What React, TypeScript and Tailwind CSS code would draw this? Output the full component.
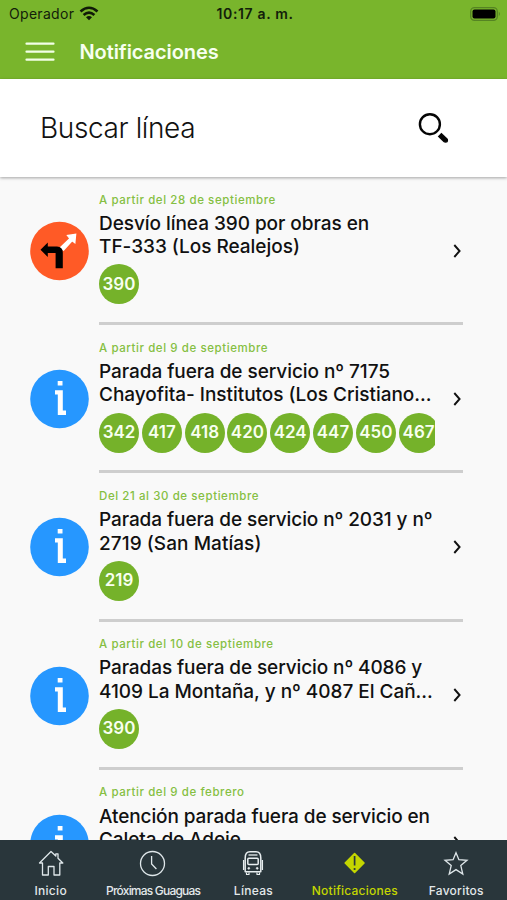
type Notice = {
  date: string;
  lines: { text: string; spacing: string }[];
  routes: string[];
  kind: 'detour' | 'info';
};

const notices: Notice[] = [
  {
    date: 'A partir del 28 de septiembre',
    lines: [
      { text: 'Desvío línea 390 por obras en', spacing: 'tracking-[-0.05px]' },
      { text: 'TF-333 (Los Realejos)', spacing: 'tracking-[-0.02px]' },
    ],
    routes: ['390'],
    kind: 'detour',
  },
  {
    date: 'A partir del 9 de septiembre',
    lines: [
      { text: 'Parada fuera de servicio nº 7175', spacing: 'tracking-[-0.06px]' },
      { text: 'Chayofita- Institutos (Los Cristiano...', spacing: 'tracking-[-0.03px]' },
    ],
    routes: ['342', '417', '418', '420', '424', '447', '450', '467'],
    kind: 'info',
  },
  {
    date: 'Del 21 al 30 de septiembre',
    lines: [
      { text: 'Parada fuera de servicio nº 2031 y nº', spacing: 'tracking-[-0.09px]' },
      { text: '2719 (San Matías)', spacing: 'tracking-[0.06px]' },
    ],
    routes: ['219'],
    kind: 'info',
  },
  {
    date: 'A partir del 10 de septiembre',
    lines: [
      { text: 'Paradas fuera de servicio nº 4086 y', spacing: 'tracking-[-0.1px]' },
      { text: '4109 La Montaña, y nº 4087 El Cañ...', spacing: 'tracking-[-0.03px]' },
    ],
    routes: ['390'],
    kind: 'info',
  },
  {
    date: 'A partir del 9 de febrero',
    lines: [
      { text: 'Atención parada fuera de servicio en', spacing: 'tracking-[-0.1px]' },
      { text: 'Caleta de Adeje', spacing: 'tracking-[-0.1px]' },
    ],
    routes: [],
    kind: 'info',
  },
];

function DetourIcon() {
  return (
    <svg viewBox="0 0 60 60" className="size-[60px]">
      <circle cx="30.5" cy="30" r="29.3" fill="#ff5a26" />
      <path d="M31 27 L41 17.6 L38.6 14.6 L46.6 13.4 L45.8 21.6 L43.2 19.6 L34.5 29 Z" fill="#fff" stroke="#fff" strokeWidth="1.4" />
      <path d="M11.5 28.8 L18.8 21.6 L18.8 25.4 L28 25.4 Q33.8 25.6 33.8 31.5 L33.8 47.3 L26.6 47.3 L26.6 32 L18.8 32 L18.8 36 Z" fill="#000" />
    </svg>
  );
}

function InfoIcon() {
  return (
    <svg viewBox="0 0 60 60" className="size-[60px]">
      <circle cx="30.5" cy="30" r="29.3" fill="#2697ff" />
      <path d="M28.7 12h4.8v4.6h-4.8z M26 21.2h7.8v20.3h3.2v4.4h-8.2V25.4h-2.8z" fill="#fff" />
    </svg>
  );
}

function NoticeRow({ notice }: { notice: Notice }) {
  return (
    <li className="flex h-[148.2px] shrink-0 pl-[29px]">
      <div className="w-[70px] shrink-0 pt-[44px]">
        {notice.kind === 'detour' ? <DetourIcon /> : <InfoIcon />}
      </div>
      <div className="flex h-full w-[364px] flex-col border-b-[3px] border-[#cecece]">
        <p className="mt-[14.7px] h-[17px] whitespace-nowrap text-[11.5px] leading-[17px] font-medium tracking-[0.58px] text-[#85bf42]">
          {notice.date}
        </p>
        <div className="flex">
          <div className="w-[338px] overflow-hidden">
            <div className="mt-[3.2px] h-[47px] text-[19px] leading-[23.4px] font-medium text-[#111]">
              {notice.lines.map((line) => (
                <p key={line.text} className={`w-max whitespace-nowrap ${line.spacing}`}>{line.text}</p>
              ))}
            </div>
            <div className="mt-[5.5px] flex h-[40px] gap-[2.8px]">
              {notice.routes.map((route) => (
                <span key={route} className="flex size-[40px] shrink-0 items-center justify-center rounded-full bg-[#75b22a] text-[17px] font-semibold text-[#f8fff0]">
                  {route}
                </span>
              ))}
            </div>
          </div>
          <svg viewBox="0 0 10 16" className="mt-[34px] ml-[18px] h-4 w-[10px] shrink-0" fill="none" stroke="#111" strokeWidth="1.9">
            <path d="M1.3 2 L6.6 8 L1.3 14" />
          </svg>
        </div>
      </div>
    </li>
  );
}

const iconClass = 'size-7';

function HomeIcon() {
  return (
    <svg viewBox="0 0 28 28" className={iconClass} fill="none" stroke="#dfe7ea" strokeWidth="1.3" strokeLinejoin="round">
      <path d="M2.5 14 L14 2.5 L18.8 7 V4.8 H21 V9.2 L25.8 14 H22.8 V26 H17 V17.5 H11.3 V26 H5.5 V14 Z" />
    </svg>
  );
}

function ClockIcon() {
  return (
    <svg viewBox="0 0 28 28" className={iconClass} fill="none" stroke="#dfe7ea" strokeWidth="1.3">
      <circle cx="14.5" cy="14.5" r="12" />
      <path d="M13.6 7 V15 L18.4 20" />
    </svg>
  );
}

function BusIcon() {
  return (
    <svg viewBox="0 0 28 28" className={iconClass} fill="none" stroke="#e8eef0" strokeWidth="1.5" strokeLinejoin="round">
      <path d="M6.2 22.8 V9 Q6.2 2.8 11 2.8 H17 Q21.8 2.8 21.8 9 V22.8 Z" />
      <rect x="8.8" y="9.2" width="10.4" height="6.2" rx="1" />
      <path d="M9.5 6 H18.5" strokeWidth="1.3" />
      <path d="M4.6 11 V21 M23.4 11 V21" strokeWidth="1.3" />
      <path d="M7.5 23.5 V25.5 H10 V23.5 M18 23.5 V25.5 H20.5 V23.5" strokeWidth="1.2" />
      <circle cx="9.8" cy="19.3" r="0.9" fill="#e8eef0" strokeWidth="0.8" />
      <circle cx="18.2" cy="19.3" r="0.9" fill="#e8eef0" strokeWidth="0.8" />
    </svg>
  );
}

function AlertIcon() {
  return (
    <svg viewBox="0 0 28 28" className={iconClass}>
      <path d="M13.6 4.6 L23 14 L13.6 23.4 L4.2 14 Z" fill="#c4d600" stroke="#c4d600" strokeWidth="1.6" strokeLinejoin="round" />
      <path d="M13.6 7 V16.5" stroke="#29363b" strokeWidth="1.7" />
      <circle cx="13.6" cy="20" r="1.1" fill="#29363b" />
    </svg>
  );
}

function StarIcon() {
  return (
    <svg viewBox="0 0 28 28" className={iconClass} fill="none" stroke="#dfe7ea" strokeWidth="1.3">
      <path d="M14 3.8 L16.9 10.7 L25 11.3 L18.8 16.6 L20.8 25 L14 20.6 L7.2 25 L9.2 16.6 L3 11.3 L11.1 10.7 Z" />
    </svg>
  );
}

const tabs = [
  { label: 'Inicio', Icon: HomeIcon, style: 'text-[#e3e8ea] tracking-[0.3px]' },
  { label: 'Próximas Guaguas', Icon: ClockIcon, style: 'text-[#e3e8ea] tracking-[-0.8px] pl-[2px]' },
  { label: 'Líneas', Icon: BusIcon, style: 'text-[#e3e8ea] tracking-[0.3px]' },
  { label: 'Notificaciones', Icon: AlertIcon, style: 'text-[#c4d600] tracking-[0.25px]' },
  { label: 'Favoritos', Icon: StarIcon, style: 'text-[#e3e8ea] tracking-[0.25px]' },
];

export default function App() {
  return (
    <div className="flex h-[900px] w-[507px] flex-col overflow-hidden bg-[#f9f9f9] font-['Inter','Liberation_Sans',sans-serif]">
      <header className="h-[79px] shrink-0 bg-[#79b52c]">
        <div className="flex h-[27px] items-center text-[14px] text-[#12200a]">
          <div className="flex flex-1 items-center gap-[5px] pl-[9px]">
            <span className="tracking-[0.3px]">Operador</span>
            <svg viewBox="0 0 20 15" className="h-[15px] w-5" fill="none" stroke="#101a08" strokeWidth="2.6">
              <path d="M1.5 5.5 Q10 -2 18.5 5.5 M4.6 9 Q10 4.2 15.4 9" />
              <path d="M7 11.2 Q10 8.7 13 11.2 L10 14.2 Z" fill="#101a08" stroke="none" />
            </svg>
          </div>
          <span className="font-semibold tracking-[0.65px]">10:17 a. m.</span>
          <div className="flex flex-1 justify-end pr-[6px]">
            <svg viewBox="0 0 31 14" className="h-[14px] w-[31px]">
              <rect x="0.7" y="0.7" width="26.6" height="12.6" rx="3.8" fill="none" stroke="#558423" strokeWidth="1.3" />
              <rect x="2.5" y="2.5" width="23" height="9" rx="2" fill="#000" />
              <path d="M28.8 4.8 Q31 7 28.8 9.2 Z" fill="#558423" />
            </svg>
          </div>
        </div>
        <div className="flex h-[50px] items-center pl-[25px]">
          <svg viewBox="0 0 30 20" className="h-5 w-[30px]" stroke="#f2ffe6" strokeWidth="2.2" strokeLinecap="round">
            <path d="M1.5 1.7 H28.5 M1.5 9.7 H28.5 M1.5 17.7 H28.5" />
          </svg>
          <h1 className="ml-[24.5px] text-[20px] font-semibold tracking-[-0.08px] text-[#f7fff0]">Notificaciones</h1>
        </div>
      </header>

      <div className="z-10 flex h-[98px] shrink-0 items-center bg-white pl-[40px] shadow-[0_1px_3px_rgba(0,0,0,0.35)]">
        <span className="w-[378px] text-[28px] font-light tracking-[-0.38px] text-[#111]">Buscar línea</span>
        <svg viewBox="0 0 32 32" className="size-8" fill="none" stroke="#050505">
          <circle cx="11.9" cy="12.2" r="10" strokeWidth="2.4" />
          <path d="M21.6 22.6 L27.3 28.2" strokeWidth="5.2" />
          <circle cx="27.6" cy="28.2" r="1.9" fill="#050505" strokeWidth="1.2" />
        </svg>
      </div>

      <ul className="flex h-[663px] shrink-0 flex-col overflow-hidden">
        {notices.map((notice) => (
          <NoticeRow key={notice.date} notice={notice} />
        ))}
      </ul>

      <nav className="grid h-[60px] shrink-0 grid-cols-5 bg-[#29363b]">
        {tabs.map(({ label, Icon, style }) => (
          <div key={label} className="flex flex-col items-center pt-[9px]">
            <Icon />
            <span className={`mt-[6px] whitespace-nowrap text-[12px] leading-4 font-medium ${style}`}>{label}</span>
          </div>
        ))}
      </nav>
    </div>
  );
}
